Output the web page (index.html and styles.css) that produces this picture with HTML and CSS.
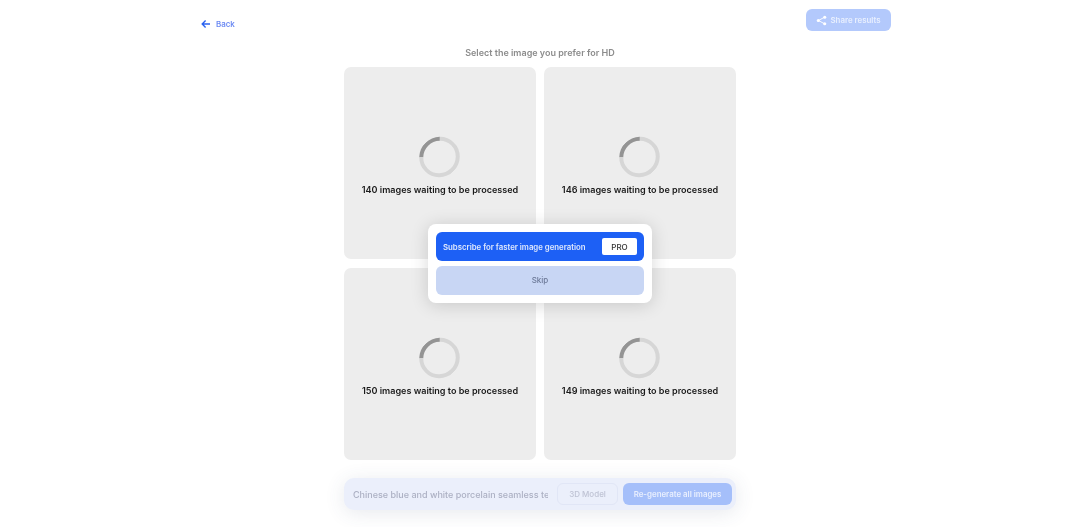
FILE: index.html
```html
<!DOCTYPE html>
<html lang="en">
<head>
<meta charset="utf-8">
<title>Select image</title>
<link rel="stylesheet" href="styles.css">
</head>
<body>
<div class="page">
  <header class="topbar">
    <a class="back" href="#">
      <svg class="back-icon" viewBox="0 0 10 10" width="10" height="10"><path d="M9 5H1.5M4.6 1.6 1.2 5l3.4 3.4" fill="none" stroke="#2a62f0" stroke-width="1.4"/></svg>
      <span>Back</span>
    </a>
    <button class="share">
      <svg viewBox="0 0 12 12" width="11" height="11"><path d="M9.3 2.4 2.7 6l6.6 3.6" fill="none" stroke="#fff" stroke-width="1"/><circle cx="9.5" cy="2.5" r="1.7" fill="#fff"/><circle cx="2.5" cy="6" r="1.7" fill="#fff"/><circle cx="9.5" cy="9.5" r="1.7" fill="#fff"/></svg>
      <span>Share results</span>
    </button>
  </header>
  <h1 class="title">Select the image you prefer for HD</h1>
  <main class="grid">
    <div class="card"><div class="spinner"></div><p class="status">140 images waiting to be processed</p></div>
    <div class="card"><div class="spinner"></div><p class="status">146 images waiting to be processed</p></div>
    <div class="card"><div class="spinner"></div><p class="status">150 images waiting to be processed</p></div>
    <div class="card"><div class="spinner"></div><p class="status">149 images waiting to be processed</p></div>
  </main>
  <div class="promptbar">
    <input class="prompt" type="text" value="Chinese blue and white porcelain seamless texture" readonly>
    <button class="model">3D Model</button>
    <button class="regen">Re-generate all images</button>
  </div>
</div>
<div class="overlay">
  <div class="dialog">
    <a class="subscribe" href="#"><span>Subscribe for faster image generation</span><span class="pro">PRO</span></a>
    <a class="skip" href="#">Skip</a>
  </div>
</div>
</body>
</html>
```
FILE: styles.css
```css
* { box-sizing: border-box; }
html, body { margin: 0; height: 100%; overflow: hidden; background: #fff; }
body { font-family: Inter, "Liberation Sans", sans-serif; }
.page { display: flex; flex-direction: column; align-items: center; height: 527px; filter: blur(.3px); }
.topbar {
  width: 702px; height: 45px; padding: 9px 0 0 12px;
  display: flex; justify-content: space-between; align-items: flex-start;
}
.back {
  display: flex; align-items: center; gap: 5px; margin-top: 9px; padding-top: 1px;
  font-size: 7.9px; font-weight: 600; line-height: 10px; color: #6d8bf3; text-decoration: none;
}
.back-icon { display: block; }
.share {
  width: 85px; height: 22px; border: 0; border-radius: 6px; background: #b3c9fc; color: #e8effe;
  display: flex; align-items: center; justify-content: center; gap: 3px;
  font: 600 7.9px Inter, sans-serif; padding: 0;
}
.title { margin: 0; height: 22px; font-size: 9px; font-weight: 600; line-height: 15px; color: #8c8c8c; }
.grid { display: grid; grid-template-columns: 192px 192px; grid-auto-rows: 192px; gap: 9px 8px; }
.card {
  background: #ededed; border-radius: 7px;
  display: flex; flex-direction: column; align-items: center; padding-top: 70px;
}
.spinner {
  width: 41px; height: 40px; margin-right: 1px; border-radius: 50%;
  border: 4px solid #d6d6d6; border-top-color: #949494;
  transform: rotate(-45deg);
}
.status { margin: 7px 0 0; font-size: 9.05px; font-weight: 600; line-height: 12px; color: #1a1a1a; white-space: nowrap; }
.promptbar {
  margin-top: 18px; width: 392px; height: 32px; padding: 0 5px 0 9px;
  display: flex; align-items: center; gap: 9px;
  background: #ebeffb; border-radius: 10px; box-shadow: 0 3px 20px rgba(60, 70, 110, .12);
}
.prompt {
  width: 195px; flex: none; padding: 0; border: 0; outline: 0; background: transparent;
  font: 500 9px Inter, sans-serif; color: #acb0c3;
}
.model {
  width: 61px; height: 22px; flex: none; padding: 0;
  border: 1px solid #e1e6f6; border-radius: 6px; background: transparent;
  font: 500 8px Inter, sans-serif; color: #bfc3d4;
}
.regen {
  width: 109px; height: 22px; flex: none; padding: 0; margin-left: -4px;
  border: 0; border-radius: 6px; background: #a5bffa;
  font: 600 7.9px Inter, sans-serif; color: #e9effe;
}
.overlay { position: fixed; inset: 0; display: flex; align-items: center; justify-content: center; }
.dialog {
  width: 224px; height: 79px; padding: 8px 8px; background: #fff; border-radius: 8px;
  display: flex; flex-direction: column; gap: 5px;
  box-shadow: 0 2px 18px rgba(0, 0, 0, .16); filter: blur(.3px);
}
.subscribe {
  height: 29px; flex: none; padding: 0 7px; border-radius: 6px; background: #1d60f5;
  display: flex; align-items: center; justify-content: space-between;
  font-size: 7.8px; font-weight: 600; color: #dfe8fd; text-decoration: none;
}
.pro {
  width: 35px; height: 17px; background: #fff; border-radius: 2px; color: #333;
  display: flex; align-items: center; justify-content: center; font-size: 8px; font-weight: 500;
}
.skip {
  height: 29px; flex: none; border-radius: 6px; background: #c8d6f4; padding-bottom: 1px;
  display: flex; align-items: center; justify-content: center;
  font-size: 8px; font-weight: 500; color: #6b7896; text-decoration: none;
}
```
